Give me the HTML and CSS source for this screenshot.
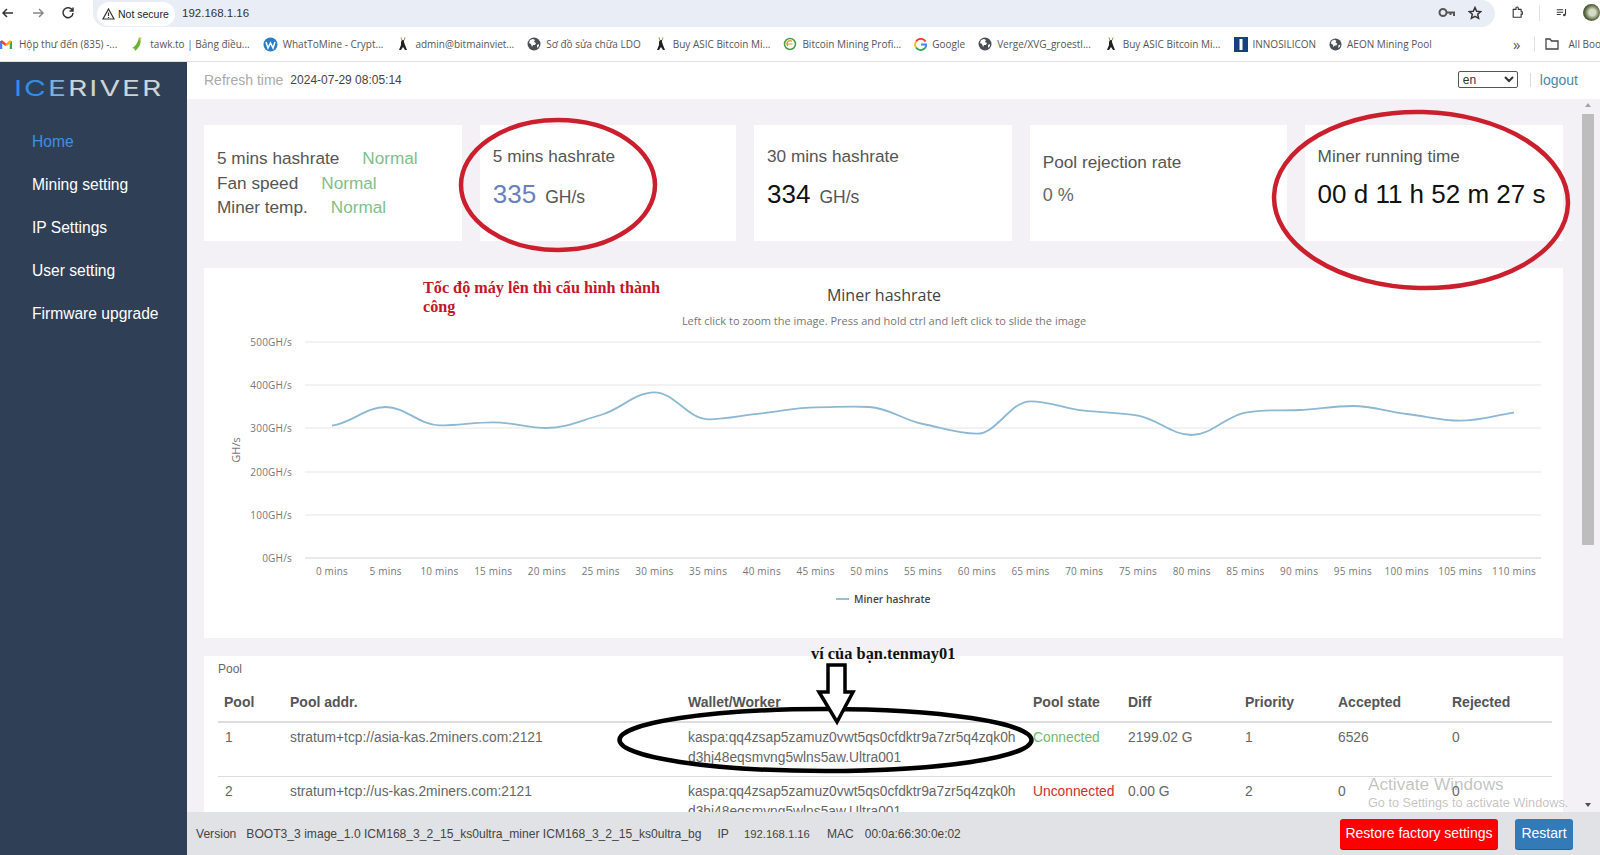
FILE: index.html
```html
<!DOCTYPE html>
<html lang="en">

<head>
    <meta charset="UTF-8">
    <meta name="viewport" content="width=device-width, initial-scale=1.0">
    <title>ICERIVER miner</title>
    <link rel="stylesheet" href="styles.css">
</head>

<body>

    <!-- Shared bookmark icons -->
    <svg class="defs" width="0" height="0">
        <symbol id="globe" viewBox="0 0 14 14">
            <circle cx="7" cy="7" r="6.5" fill="#4a4f55"/>
            <path d="M3 3l3-1 2 1-1 2 2 1-1 2-2 0-1 2-1-3-2-1zM10 8l2-1 0 2-2 2z" fill="#fff"/>
        </symbol>
        <symbol id="miner" viewBox="0 0 14 14">
            <path d="M6 3l2 0 0 2 1 3 2 5-2 0-2-3-2 3-2 0 2-5 0-3z" fill="#222"/>
            <path d="M5 0.5l1 3M9 0.5l-1 3" stroke="#a08a50" fill="none"/>
        </symbol>
    </svg>

    <!-- Browser toolbar -->
    <div class="toolbar">
        <div class="nav-icons">
            <svg width="14" height="14" viewBox="0 0 14 14"><path d="M12 7H2M6 3L2 7l4 4" fill="none" stroke="#333" stroke-width="1.5"/></svg>
            <svg width="14" height="14" viewBox="0 0 14 14"><path d="M2 7h10M8 3l4 4-4 4" fill="none" stroke="#888" stroke-width="1.5"/></svg>
            <svg width="14" height="14" viewBox="0 0 14 14"><path d="M11.5 4.5A5 5 0 1 0 12 7M12 1.5v3.5H8.5" fill="none" stroke="#333" stroke-width="1.5"/></svg>
        </div>
        <div class="address">
            <div class="chip">
                <svg width="13" height="12" viewBox="0 0 13 12"><path d="M6.5 1L12 11H1z M6.5 4.5v3.5 M6.5 9v1" fill="none" stroke="#333" stroke-width="1.2"/></svg>
                Not secure
            </div>
            <span class="url">192.168.1.16</span>
            <div class="address-icons">
                <svg width="17" height="11" viewBox="0 0 17 11"><circle cx="5" cy="5.5" r="3.5" fill="none" stroke="#555" stroke-width="2"/><path d="M8.5 5.5H16V9M12.5 5.5V8" fill="none" stroke="#555" stroke-width="2"/></svg>
                <svg width="14" height="14" viewBox="0 0 14 14"><path d="M7 1.5l1.7 3.7 4 .4-3 2.7.9 4L7 10.3l-3.6 2 .9-4-3-2.7 4-.4z" fill="none" stroke="#333" stroke-width="1.5"/></svg>
            </div>
        </div>
        <div class="tool-icons">
            <svg width="14" height="15" viewBox="0 0 14 15"><path d="M1.5 3.5H5V2a1 1 0 0 1 3 0v1.5h3.5v3H13v3h-1.500v4H1.500z" fill="none" stroke="#333" stroke-width="1.4"/></svg>
            <span class="tool-sep"></span>
            <svg width="14" height="12" viewBox="0 0 14 12"><path d="M1 2h8M1 5h8M1 8h5M12 1v7" fill="none" stroke="#333" stroke-width="1.3"/><circle cx="10.5" cy="8.5" r="1.6" fill="#333"/></svg>
            <span class="avatar"></span>
        </div>
    </div>

    <!-- Bookmarks -->
    <div class="bookmarks">
        <span class="mark mark-gmail">
            <svg width="12" height="10" viewBox="0 0 12 10">
                <path d="M1 10V2" stroke="#4285f4" stroke-width="2.5"/>
                <path d="M11 10V2" stroke="#34a853" stroke-width="2.5"/>
                <path d="M1 2l5 4" stroke="#ea4335" stroke-width="2.5"/>
                <path d="M11 2L6 6" stroke="#f4b400" stroke-width="2.5"/>
            </svg>
            Hộp thư đến (835) -...
        </span>
        <span class="mark">
            <svg width="15" height="16" viewBox="0 0 15 16"><path d="M9 1c3 4 2 9-4 14 0-2-1-3-3-3 4-2 6-6 7-11z" fill="#6ab42d"/><path d="M9 1l3 1-2 3z" fill="#c9d65a"/></svg>
            tawk.to | Bảng điều...
        </span>
        <span class="mark">
            <svg width="15" height="15" viewBox="0 0 15 15"><circle cx="7.5" cy="7.5" r="7" fill="#2b7cc4"/><path d="M3 5l2 6 2.5-5 2.5 5 2-6" fill="none" stroke="#fff" stroke-width="1.5"/></svg>
            WhatToMine - Crypt...
        </span>
        <span class="mark"><svg width="14" height="14"><use href="#miner"/></svg>admin@bitmainviet...</span>
        <span class="mark"><svg width="14" height="14"><use href="#globe"/></svg>Sơ đồ sửa chữa LDO</span>
        <span class="mark"><svg width="14" height="14"><use href="#miner"/></svg>Buy ASIC Bitcoin Mi...</span>
        <span class="mark">
            <svg width="14" height="14" viewBox="0 0 14 14"><circle cx="7" cy="7" r="5.5" fill="none" stroke="#4a9a4a" stroke-width="1.5"/><path d="M4.5 7h5M9 4.5A3 3 0 0 0 5 9" fill="none" stroke="#d8a020" stroke-width="1.2"/></svg>
            Bitcoin Mining Profi...
        </span>
        <span class="mark">
            <svg width="13" height="13" viewBox="0 0 14 14">
                <path d="M12.5 3.8A6 6 0 0 0 2.2 3.8" fill="none" stroke="#ea4335" stroke-width="2"/>
                <path d="M2.2 3.8a6 6 0 0 0 0 6.4" fill="none" stroke="#fbbc05" stroke-width="2"/>
                <path d="M2.2 10.2a6 6 0 0 0 9.8 .5" fill="none" stroke="#34a853" stroke-width="2"/>
                <path d="M12 10.7A6 6 0 0 0 13 7H7.5" fill="none" stroke="#4285f4" stroke-width="2"/>
            </svg>
            Google
        </span>
        <span class="mark"><svg width="14" height="14"><use href="#globe"/></svg>Verge/XVG_groestl...</span>
        <span class="mark"><svg width="14" height="14"><use href="#miner"/></svg>Buy ASIC Bitcoin Mi...</span>
        <span class="mark">
            <svg width="14" height="15" viewBox="0 0 14 15"><rect width="14" height="15" fill="#17407f"/><rect x="5.5" y="2" width="3" height="11" fill="#fff"/></svg>
            INNOSILICON
        </span>
        <span class="mark"><svg width="13" height="13"><use href="#globe"/></svg>AEON Mining Pool</span>
        <span class="mark-end">
            <span class="more">»</span>
            <span class="tool-sep"></span>
            <svg width="14" height="12" viewBox="0 0 14 12"><path d="M1 1h4l1.5 2H13v8H1z" fill="none" stroke="#444" stroke-width="1.3"/></svg>
            <span>All Boo</span>
        </span>
    </div>

    <div class="app">
        <!-- Sidebar -->
        <nav class="sidebar">
            <div class="logo"><span class="logo-text"><span class="logo-blue">IC</span><span class="logo-mid">E</span>RIVER</span></div>
            <a class="nav-item active">Home</a>
            <a class="nav-item">Mining setting</a>
            <a class="nav-item">IP Settings</a>
            <a class="nav-item">User setting</a>
            <a class="nav-item">Firmware upgrade</a>
        </nav>

        <div class="right">
            <header class="topbar">
                <span class="refresh-label">Refresh time</span>
                <span class="refresh-time">2024-07-29 08:05:14</span>
                <select class="lang">
                    <option>en</option>
                </select>
                <span class="logout">logout</span>
            </header>

            <div class="body-row">
                <main class="content">
                    <!-- Status cards -->
                    <section class="cards">
                        <div class="card card-status">
                            <div>5 mins hashrate<span class="ok">Normal</span></div>
                            <div>Fan speed<span class="ok">Normal</span></div>
                            <div>Miner temp.<span class="ok">Normal</span></div>
                        </div>
                        <div class="card">
                            <div class="card-title">5 mins hashrate</div>
                            <div class="card-value"><span class="num num-blue">335</span><span class="unit">GH/s</span></div>
                        </div>
                        <div class="card">
                            <div class="card-title">30 mins hashrate</div>
                            <div class="card-value"><span class="num">334</span><span class="unit">GH/s</span></div>
                        </div>
                        <div class="card card-reject">
                            <div class="card-title">Pool rejection rate</div>
                            <div class="reject-value">0 %</div>
                        </div>
                        <div class="card">
                            <div class="card-title">Miner running time</div>
                            <div class="card-value"><span class="num">00 d 11 h 52 m 27 s</span></div>
                        </div>
                    </section>

                    <!-- Hashrate chart -->
                    <section class="panel chart-panel">
                        <svg class="chart" viewBox="204 268 1359 370" width="1359" height="370">
                            <text class="chart-title" x="884" y="301" text-anchor="middle">Miner hashrate</text>
                            <text class="chart-sub" x="884" y="325" text-anchor="middle">Left click to zoom the image. Press and hold ctrl and left click to slide the image</text>

                            <g class="grid">
                                <line x1="305" x2="1541" y1="342" y2="342"/>
                                <line x1="305" x2="1541" y1="385" y2="385"/>
                                <line x1="305" x2="1541" y1="428" y2="428"/>
                                <line x1="305" x2="1541" y1="472" y2="472"/>
                                <line x1="305" x2="1541" y1="515" y2="515"/>
                            </g>
                            <line class="axis" x1="305" x2="1541" y1="558" y2="558"/>

                            <g class="y-labels" text-anchor="end">
                                <text x="292" y="346">500GH/s</text>
                                <text x="292" y="389">400GH/s</text>
                                <text x="292" y="432">300GH/s</text>
                                <text x="292" y="476">200GH/s</text>
                                <text x="292" y="519">100GH/s</text>
                                <text x="292" y="562">0GH/s</text>
                            </g>
                            <text class="y-title" transform="translate(240 450) rotate(-90)" text-anchor="middle">GH/s</text>

                            <g class="x-labels" text-anchor="middle">
                                <text x="332" y="575">0 mins</text>
                                <text x="385.7" y="575">5 mins</text>
                                <text x="439.5" y="575">10 mins</text>
                                <text x="493.2" y="575">15 mins</text>
                                <text x="546.9" y="575">20 mins</text>
                                <text x="600.7" y="575">25 mins</text>
                                <text x="654.4" y="575">30 mins</text>
                                <text x="708.1" y="575">35 mins</text>
                                <text x="761.8" y="575">40 mins</text>
                                <text x="815.6" y="575">45 mins</text>
                                <text x="869.3" y="575">50 mins</text>
                                <text x="923" y="575">55 mins</text>
                                <text x="976.8" y="575">60 mins</text>
                                <text x="1030.5" y="575">65 mins</text>
                                <text x="1084.2" y="575">70 mins</text>
                                <text x="1138" y="575">75 mins</text>
                                <text x="1191.7" y="575">80 mins</text>
                                <text x="1245.4" y="575">85 mins</text>
                                <text x="1299.1" y="575">90 mins</text>
                                <text x="1352.9" y="575">95 mins</text>
                                <text x="1406.6" y="575">100 mins</text>
                                <text x="1460.3" y="575">105 mins</text>
                                <text x="1514" y="575">110 mins</text>
                            </g>

                            <path class="series" d="M332 425.7C352 422.7 365.7 407 385.7 407
                                S419.5 425.3 439.5 425.3 S473.2 422.3 493.2 422.3
                                S526.9 428 546.9 428 S580.7 420.4 600.7 415
                                S634.4 392.3 654.4 392.3 S688.1 419.3 708.1 419.3
                                S741.8 415.1 761.8 413.3 S795.6 407.3 815.6 407.3
                                S849.3 406 869.3 407 S903 420 923 424
                                S956.8 433.7 976.8 433.7 S1010.5 401.3 1030.5 401.3
                                S1064.2 408.5 1084.2 410.7 S1118 412.1 1138 415.7
                                S1171.7 435 1191.7 435 S1225.4 416.4 1245.4 412.7
                                S1279.1 411 1299.1 410 S1332.9 406 1352.9 406
                                S1386.6 411.8 1406.6 414 S1440.3 420.7 1460.3 420.7
                                S1494 415.7 1514 412.7"/>

                            <line class="series" x1="836" x2="849" y1="599" y2="599"/>
                            <text class="legend" x="854" y="603">Miner hashrate</text>
                        </svg>
                    </section>

                    <!-- Pool table -->
                    <section class="panel pool-panel">
                        <div class="pool-label">Pool</div>
                        <table class="pool-table">
                            <colgroup>
                                <col class="c-pool">
                                <col class="c-addr">
                                <col class="c-wallet">
                                <col class="c-state">
                                <col class="c-diff">
                                <col class="c-prio">
                                <col class="c-acc">
                                <col class="c-rej">
                            </colgroup>
                            <thead>
                                <tr>
                                    <th>Pool</th>
                                    <th>Pool addr.</th>
                                    <th>Wallet/Worker</th>
                                    <th>Pool state</th>
                                    <th>Diff</th>
                                    <th>Priority</th>
                                    <th>Accepted</th>
                                    <th>Rejected</th>
                                </tr>
                            </thead>
                            <tbody>
                                <tr>
                                    <td>1</td>
                                    <td>stratum+tcp://asia-kas.2miners.com:2121</td>
                                    <td class="wallet">kaspa:qq4zsap5zamuz0vwt5qs0cfdktr9a7zr5q4zqk0h<br>d3hj48eqsmvng5wlns5aw.Ultra001</td>
                                    <td class="ok-cell">Connected</td>
                                    <td>2199.02 G</td>
                                    <td>1</td>
                                    <td>6526</td>
                                    <td>0</td>
                                </tr>
                                <tr>
                                    <td>2</td>
                                    <td>stratum+tcp://us-kas.2miners.com:2121</td>
                                    <td class="wallet">kaspa:qq4zsap5zamuz0vwt5qs0cfdktr9a7zr5q4zqk0h<br>d3hj48eqsmvng5wlns5aw.Ultra001</td>
                                    <td class="bad-cell">Unconnected</td>
                                    <td>0.00 G</td>
                                    <td>2</td>
                                    <td>0</td>
                                    <td>0</td>
                                </tr>
                            </tbody>
                        </table>
                    </section>
                </main>

                <!-- Scrollbar -->
                <div class="scrollbar">
                    <span class="arrow-up"></span>
                    <div class="track"><div class="thumb"></div></div>
                    <span class="arrow-down"></span>
                </div>
            </div>

            <footer class="footer">
                <span class="foot-label">Version</span>
                <span class="foot-version">BOOT3_3 image_1.0 ICM168_3_2_15_ks0ultra_miner ICM168_3_2_15_ks0ultra_bg</span>
                <span class="foot-label">IP</span>
                <span class="foot-ip">192.168.1.16</span>
                <span class="foot-label">MAC</span>
                <span class="foot-mac">00:0a:66:30:0e:02</span>
                <button class="btn btn-red">Restore factory settings</button>
                <button class="btn btn-blue">Restart</button>
            </footer>
        </div>
    </div>

    <!-- Hand drawn annotations on top of the page -->
    <svg class="marks" viewBox="0 0 1600 855" width="1600" height="855">
        <ellipse class="ring-red" cx="558" cy="185" rx="97" ry="65"/>
        <ellipse class="ring-red" cx="1421" cy="200" rx="147" ry="88" transform="rotate(1.5 1421 200)"/>
        <ellipse class="ring-black" cx="825.5" cy="740" rx="206" ry="31"/>
        <path class="arrow" d="M828 665H845V692H853L837 722L819 692H828Z"/>
    </svg>
    <div class="note note-red">Tốc độ máy lên thì cấu hình thành<br>công</div>
    <div class="note note-black">ví của bạn.tenmay01</div>
    <div class="watermark">
        <div class="wm-big">Activate Windows</div>
        <div class="wm-small">Go to Settings to activate Windows.</div>
    </div>

</body>

</html>
```

FILE: styles.css
```css
* {
    box-sizing: border-box;
}

html,
body {
    height: 100%;
}

body {
    font-family: "Liberation Sans", Arial, sans-serif;
    margin: 0;
    height: 855px;
    overflow: hidden;
    display: flex;
    flex-direction: column;
    position: relative;
    background-color: #fff;
    color: #555;
}

.defs {
    position: absolute;
}

/* Browser toolbar */
.toolbar {
    height: 27px;
    flex-shrink: 0;
    display: flex;
    align-items: center;
    background-color: #fff;
}

.nav-icons {
    display: flex;
    flex-shrink: 0;
    gap: 16px;
    padding: 0 0 2px 1px;
    width: 93px;
}

.address {
    width: 1402px;
    height: 27px;
    flex-shrink: 0;
    background-color: #e9eef6;
    border-radius: 0 14px 14px 14px;
    display: flex;
    align-items: center;
    padding-left: 4px;
}

.chip {
    height: 24px;
    width: 78px;
    background-color: #fff;
    border-radius: 12px;
    display: flex;
    align-items: center;
    gap: 3px;
    padding-left: 5px;
    font-size: 10.5px;
    color: #222;
    white-space: nowrap;
}

.url {
    font-size: 11.5px;
    color: #333;
    margin: 0 0 2px 7px;
}

.address-icons {
    margin-left: auto;
    display: flex;
    align-items: center;
    gap: 13px;
    padding: 0 13px 2px 0;
}

.tool-icons {
    display: flex;
    align-items: center;
    flex: 1;
    min-width: 0;
    gap: 16px;
    padding: 0 0 2px 17px;
}

.tool-sep {
    width: 1px;
    height: 16px;
    background-color: #dfe1e5;
}

.avatar {
    width: 17px;
    height: 17px;
    border-radius: 50%;
    background: radial-gradient(circle at 55% 50%, #d5dcc5 0 25%, #55633d 60%, #2b3322 100%);
    flex-shrink: 0;
}

/* Bookmarks */
.bookmarks {
    height: 35px;
    flex-shrink: 0;
    display: flex;
    align-items: center;
    gap: 13px;
    font-family: "Open Sans", sans-serif;
    font-size: 10px;
    color: #555;
    background-color: #fff;
    border-bottom: 1px solid #dfe1e5;
    white-space: nowrap;
}

.mark {
    display: flex;
    align-items: center;
    gap: 5px;
}

.mark-gmail {
    gap: 7px;
}

.mark-end {
    margin-left: auto;
    display: flex;
    align-items: center;
    gap: 10px;
    margin-right: -1px;
}

.more {
    font-size: 15px;
    margin-right: 3px;
}

/* App frame */
.app {
    flex: 1;
    display: flex;
    min-height: 0;
}

.sidebar {
    width: 187px;
    flex-shrink: 0;
    background-color: #2f4056;
}

.logo {
    height: 58px;
    padding: 14px 0 0 14px;
    line-height: 24px;
    white-space: nowrap;
}

.logo-text {
    display: inline-block;
    font-family: "Inter", "Liberation Sans", sans-serif;
    font-size: 22px;
    font-weight: 400;
    letter-spacing: 1.5px;
    color: #cdd3d8;
    transform: scaleX(1.36);
    transform-origin: left center;
}

.logo-blue {
    color: #2f8fe6;
}

.logo-mid {
    color: #7fb0dd;
}

.nav-item {
    display: block;
    height: 43px;
    line-height: 43px;
    padding-left: 32px;
    font-size: 15.6px;
    color: #fff;
}

.nav-item.active {
    color: #3d8fe8;
}

.right {
    flex: 1;
    min-width: 0;
    display: flex;
    flex-direction: column;
}

.topbar {
    height: 37px;
    flex-shrink: 0;
    display: flex;
    align-items: center;
    padding: 0 22px 2px 17px;
    background-color: #fff;
}

.refresh-label {
    font-size: 14px;
    color: #aaa;
}

.refresh-time {
    font-size: 12px;
    color: #444;
    margin-left: 7px;
}

.lang {
    margin-left: auto;
    width: 60px;
    height: 17px;
    font-family: inherit;
    font-size: 12px;
    background-color: #fff;
    color: #333;
    border: 1px solid #555;
    border-radius: 2px;
    padding: 0;
}

.logout {
    font-size: 14px;
    color: #4f86a8;
    margin-left: 12px;
    padding-left: 9px;
    border-left: 1px solid #d5dde3;
    line-height: 14px;
}

.body-row {
    flex: 1;
    min-height: 0;
    display: flex;
    background-color: #f3f1f6;
}

.content {
    flex: 1;
    min-width: 0;
    overflow: hidden;
    padding: 26px 16px 0 17px;
}

/* Status cards */
.cards {
    display: grid;
    grid-template-columns: 258px 256.4px 258px 257px 258px;
    gap: 17.8px;
    height: 116px;
    margin-bottom: 27px;
}

.card {
    background-color: #fff;
    padding: 21px 0 0 13px;
    color: #555;
}

.card-title {
    font-size: 17.2px;
    line-height: 20px;
}

.card-value {
    display: flex;
    align-items: baseline;
    margin-top: 12px;
    color: #111;
}

.num {
    font-size: 26px;
    line-height: 32px;
    white-space: nowrap;
}

.num-blue {
    color: #6a7fbf;
}

.unit {
    font-size: 17.5px;
    margin-left: 9px;
    color: #555;
}

.card-status {
    padding-top: 21px;
    font-size: 17.2px;
    line-height: 24.5px;
}

.ok {
    color: #7fc089;
    margin-left: 23px;
}

.card-reject {
    padding-top: 27px;
}

.reject-value {
    font-size: 18px;
    margin-top: 13px;
    color: #666;
}

/* Panels */
.panel {
    background-color: #fff;
}

.chart-panel {
    height: 370px;
    margin-bottom: 18px;
}

.chart {
    display: block;
    font-family: "Open Sans", sans-serif;
}

.chart-title {
    font-size: 16px;
    fill: #444;
}

.chart-sub {
    font-size: 11px;
    fill: #777;
}

.grid line {
    stroke: #eeeeee;
    stroke-width: 1.5;
}

.axis {
    stroke: #cfd3d6;
    stroke-width: 1;
}

.y-labels,
.x-labels {
    font-size: 10px;
    letter-spacing: 0.2px;
    fill: #777;
}

.y-title {
    font-size: 11px;
    fill: #777;
}

.series {
    fill: none;
    stroke: #8db8d4;
    stroke-width: 1.8;
}

.legend {
    font-size: 10.3px;
    font-weight: 600;
    fill: #444;
}

.pool-panel {
    height: 200px;
    padding: 6px 0 0 14px;
}

.pool-label {
    font-size: 12px;
    line-height: 15px;
    color: #666;
}

.pool-table {
    table-layout: fixed;
    border-collapse: collapse;
    width: 1334px;
    margin-top: 10px;
    font-size: 13.8px;
    color: #666;
}

.c-pool { width: 65px; }
.c-addr { width: 398px; }
.c-wallet { width: 345px; }
.c-state { width: 95px; }
.c-diff { width: 117px; }
.c-prio { width: 93px; }
.c-acc { width: 114px; }
.c-rej { width: 107px; }

.pool-table th {
    text-align: left;
    font-weight: bold;
    font-size: 14px;
    color: #555;
    height: 35px;
    padding: 0 7px 4px;
    border-bottom: 2px solid #ddd;
}

.pool-table th:first-child {
    padding-left: 6px;
}

.pool-table td {
    vertical-align: top;
    line-height: 20px;
    padding: 5px 7px 8px;
    border-bottom: 1px solid #ddd;
    white-space: nowrap;
}

.ok-cell {
    color: #6dbb6d;
}

.bad-cell {
    color: #c9302c;
}

/* Scrollbar */
.scrollbar {
    width: 21px;
    flex-shrink: 0;
    display: flex;
    flex-direction: column;
    align-items: center;
    padding: 4px 4px 5px 0;
}

.arrow-up,
.arrow-down {
    width: 0;
    height: 0;
    flex-shrink: 0;
    border-left: 3px solid transparent;
    border-right: 3px solid transparent;
}

.arrow-up {
    border-bottom: 4px solid #a3a3a3;
}

.arrow-down {
    border-top: 4px solid #505050;
}

.track {
    flex: 1;
    width: 100%;
    padding-top: 7px;
}

.thumb {
    width: 12px;
    margin: 0 auto;
    height: 431px;
    background-color: #bdbdbd;
}

/* Footer */
.footer {
    height: 43px;
    flex-shrink: 0;
    display: flex;
    align-items: center;
    padding: 0 27px 0 9px;
    background-color: #e1e2e6;
    font-size: 12.1px;
    color: #444;
    white-space: nowrap;
}

.foot-version {
    margin: 0 16px 0 10px;
}

.foot-ip {
    margin: 0 17px 0 15px;
    font-size: 11.3px;
}

.foot-mac {
    margin-left: 11px;
    font-size: 11.9px;
}

.btn {
    height: 30px;
    border: none;
    border-radius: 3px;
    color: #fff;
    font-family: inherit;
    font-size: 14px;
    padding: 0 0 2px;
}

.btn-red {
    width: 158px;
    margin-left: auto;
    background-color: #f00;
    box-shadow: 0 1px 0 #a01010;
}

.btn-blue {
    width: 58px;
    margin-left: 17px;
    background-color: #337ab7;
    box-shadow: 0 1px 0 #2a5f8e;
}

/* Annotations */
.marks {
    position: absolute;
    top: 0;
    left: 0;
    pointer-events: none;
}

.ring-red {
    fill: none;
    stroke: #cb1f2e;
    stroke-width: 4.5;
}

.ring-black {
    fill: none;
    stroke: #000;
    stroke-width: 4.5;
}

.arrow {
    fill: #fff;
    stroke: #000;
    stroke-width: 3.5;
}

.note {
    position: absolute;
    font-family: "Liberation Serif", "Times New Roman", serif;
    font-weight: bold;
    line-height: 19px;
    white-space: nowrap;
}

.note-red {
    left: 423px;
    top: 279px;
    font-size: 16.2px;
    color: #c4162a;
}

.note-black {
    left: 811px;
    top: 644px;
    color: #111;
    font-size: 16.4px;
}

.watermark {
    position: absolute;
    left: 1368px;
    top: 773px;
    color: rgba(120, 120, 120, 0.45);
    pointer-events: none;
    white-space: nowrap;
}

.wm-big {
    font-size: 17.2px;
    line-height: 22px;
}

.wm-small {
    font-size: 12.7px;
    line-height: 16px;
}
```
